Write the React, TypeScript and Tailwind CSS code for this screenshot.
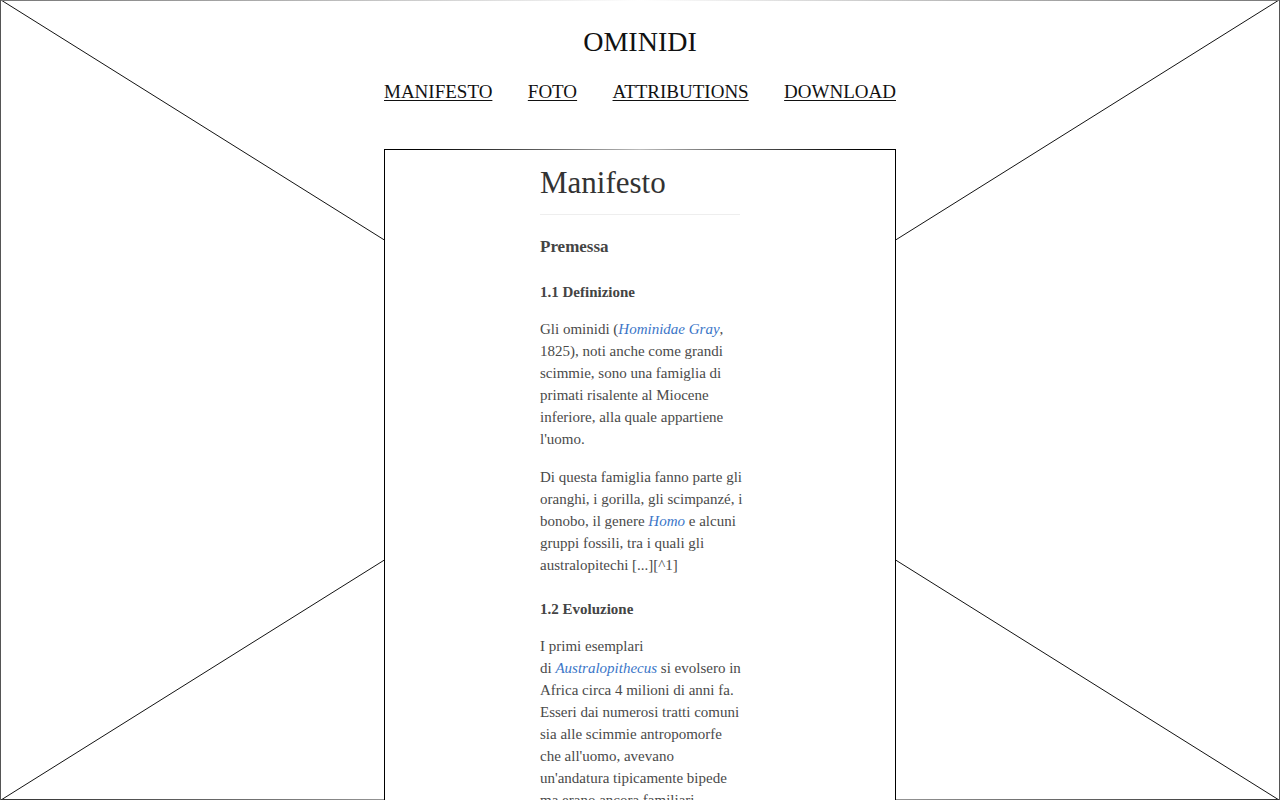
const serif = { fontFamily: '"Liberation Serif", "DejaVu Serif", serif' };

const Link = ({ children }: { children: React.ReactNode }) => (
  <a href="#" className="italic text-[#3b76c8]">
    {children}
  </a>
);

const Lines = ({ lines }: { lines: React.ReactNode[] }) => (
  <p className="text-[15px] leading-[22px] text-[#4a4a4a]">
    {lines.map((l, i) => (
      <span key={i} className="block whitespace-nowrap">
        {l}
      </span>
    ))}
  </p>
);

const App = () => {
  return (
    <div
      className="relative h-[800px] w-full overflow-hidden bg-white border-x border-[#555]"
      style={serif}
    >
      {/* placeholder cross behind everything */}
      <svg
        className="absolute inset-0 h-full w-full"
        viewBox="0 0 1280 800"
        preserveAspectRatio="none"
      >
        <line x1="0" y1="0" x2="1280" y2="800" stroke="#111" strokeWidth="1" />
        <line x1="1280" y1="0" x2="0" y2="800" stroke="#111" strokeWidth="1" />
      </svg>
      <div className="absolute left-0 right-0 top-0 h-px bg-gradient-to-r from-[#777] via-white to-[#777]" />
      <div className="absolute left-0 right-0 bottom-0 h-px bg-gradient-to-r from-[#333] via-[#ddd] to-[#333]" />

      <div className="relative flex flex-col items-center">
        {/* header */}
        <h1 className="mt-[24px] text-[28px] leading-[36px] text-[#111]">OMINIDI</h1>
        <nav className="mt-[20px] flex w-[512px] justify-between text-[19px] leading-[24px] text-[#111]">
          <a href="#" className="underline underline-offset-[2px]">MANIFESTO</a>
          <a href="#" className="underline underline-offset-[2px]">FOTO</a>
          <a href="#" className="underline underline-offset-[2px]">ATTRIBUTIONS</a>
          <a href="#" className="underline underline-offset-[2px]">DOWNLOAD</a>
        </nav>

        {/* content card */}
        <div className="mt-[45px] w-[512px] bg-white border-x border-black">
          <div className="h-px w-full bg-gradient-to-r from-black via-[#bbb] to-black" />
          <article className="mx-auto w-[200px] pt-[14px] pb-10 text-[#333]">
            <h2 className="border-b border-[#eee] pb-3 text-[31px] leading-[38px] text-[#333]">
              Manifesto
            </h2>
            <h3 className="mt-[20px] text-[17px] leading-[24px] font-bold text-[#444]">Premessa</h3>
            <h4 className="mt-[22px] text-[15px] leading-[22px] font-bold text-[#444]">1.1 Definizione</h4>
            <div className="mt-[15px]">
              <Lines
                lines={[
                  <>
                    Gli ominidi (<Link>Hominidae Gray</Link>,
                  </>,
                  "1825), noti anche come grandi",
                  "scimmie, sono una famiglia di",
                  "primati risalente al Miocene",
                  "inferiore, alla quale appartiene",
                  "l'uomo.",
                ]}
              />
            </div>
            <div className="mt-[16px]">
              <Lines
                lines={[
                  "Di questa famiglia fanno parte gli",
                  "oranghi, i gorilla, gli scimpanzé, i",
                  <>
                    bonobo, il genere <Link>Homo</Link> e alcuni
                  </>,
                  "gruppi fossili, tra i quali gli",
                  "australopitechi [...][^1]",
                ]}
              />
            </div>
            <h4 className="mt-[22px] text-[15px] leading-[22px] font-bold text-[#444]">1.2 Evoluzione</h4>
            <div className="mt-[15px]">
              <Lines
                lines={[
                  "I primi esemplari",
                  <>
                    di <Link>Australopithecus</Link> si evolsero in
                  </>,
                  "Africa circa 4 milioni di anni fa.",
                  "Esseri dai numerosi tratti comuni",
                  "sia alle scimmie antropomorfe",
                  "che all'uomo, avevano",
                  "un'andatura tipicamente bipede",
                  "ma erano ancora familiari",
                  "all'ambiente degli alberi.",
                ]}
              />
            </div>
          </article>
        </div>
      </div>
    </div>
  );
};

export default App;
